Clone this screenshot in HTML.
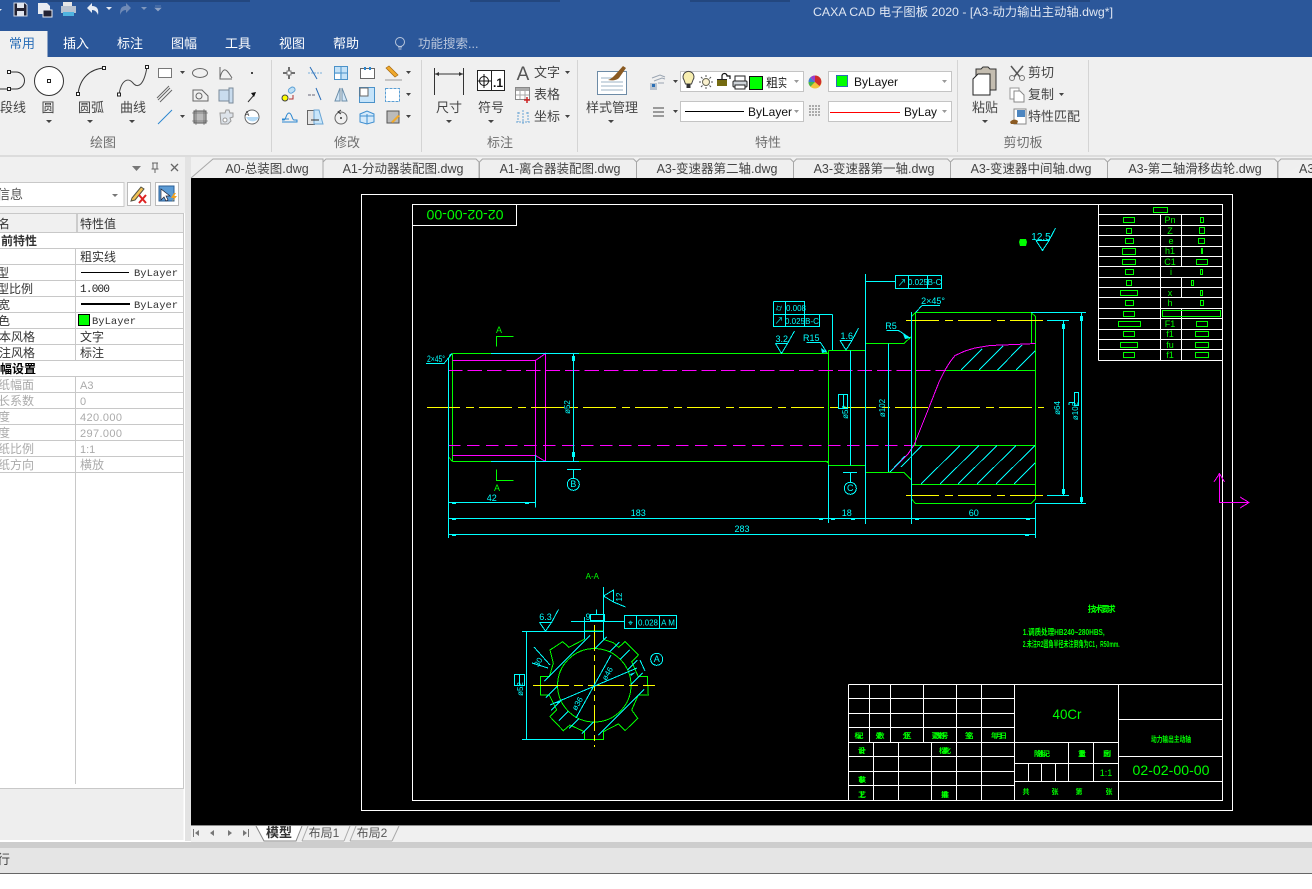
<!DOCTYPE html>
<html lang="zh"><head><meta charset="utf-8"><title>CAXA CAD</title>
<style>
html,body{margin:0;padding:0;background:#fff;width:1312px;height:889px;overflow:hidden}
svg{display:block;position:absolute;left:0;top:0}
text{font-family:"Liberation Sans","Noto Sans CJK SC",sans-serif;white-space:pre}
.c{text-anchor:middle}
.r{font-size:13px;fill:#444}
.t{font-size:13px;fill:#fff;text-anchor:middle}
.d{font-size:12.5px;fill:#444;text-anchor:middle}
.g{font-size:12px;fill:#222;font-family:"Liberation Mono","WenQuanYi Zen Hei",monospace}
.gd{font-size:12px;fill:#aaa;font-family:"Liberation Mono","WenQuanYi Zen Hei",monospace}
.m{font-family:"Liberation Mono","Noto Sans CJK SC",monospace}
.cy{fill:#0ff;font-size:9px;text-anchor:middle}
.gr{fill:#0f0;font-size:9px;text-anchor:middle}
.gs{fill:#0f0;font-size:7px;font-weight:bold;text-anchor:middle;font-family:"Noto Sans CJK SC",sans-serif}
.ic{fill:none;stroke:#666;stroke-width:1}
.bl{fill:none;stroke:#2a86d0;stroke-width:1}
.ar{fill:#444}
</style></head><body>
<svg width="1312" height="889" viewBox="0 0 1312 889" xmlns="http://www.w3.org/2000/svg">
<!-- backgrounds -->
<rect width="1312" height="57" fill="#2b579a"/>
<rect x="40" y="0" width="210" height="2" fill="#23477f"/><rect x="470" y="0" width="90" height="2" fill="#23477f"/><rect x="690" y="0" width="100" height="2" fill="#23477f"/><rect x="1000" y="0" width="90" height="2" fill="#23477f"/>
<rect y="57" width="1312" height="98" fill="#f0f0f0"/>
<rect y="155" width="1312" height="2" fill="#dcdcdc"/>
<rect y="157" width="1312" height="21" fill="#f0f0f0"/>
<rect x="0" y="178" width="185" height="662" fill="#fff"/>
<rect x="0" y="178" width="185" height="35" fill="#f0f0f0"/>
<rect x="185" y="157" width="6" height="684" fill="#e3e3e3"/>
<rect x="191" y="178" width="1121" height="647" fill="#000"/>
<rect x="191" y="825" width="1121" height="17" fill="#f0f0f0"/>
<line x1="191" y1="825.5" x2="1312" y2="825.5" stroke="#8c8c8c"/>
<rect y="788" width="183.500" height="52" fill="#eeeeee"/>
<line x1="0" y1="788.500" x2="184" y2="788.500" stroke="#c8c8c8"/>
<rect y="842" width="1312" height="6" fill="#cdcdcd"/>
<rect y="848" width="1312" height="25" fill="#e5e5e5"/>
<rect y="873" width="1312" height="1" fill="#666"/>
<rect y="874" width="1312" height="15" fill="#fff"/>

<!-- quick access -->
<g>
<path d="M14 3h11l2 2v11H14z" fill="#223" stroke="#cfd6e3"/><rect x="17" y="3" width="7" height="5" fill="#dfe4ee"/><rect x="17" y="11" width="7" height="5" fill="#dfe4ee"/>
<path d="M38 3h9l3 3v8H38z" fill="#e8ebf1"/><rect x="43" y="10" width="9" height="7" fill="#223" stroke="#e8ebf1"/>
<rect x="63" y="2" width="9" height="4" fill="#e6e6e6"/><rect x="61" y="6" width="15" height="7" fill="#b8c2d0"/><rect x="63" y="12" width="11" height="4" fill="#4fb3e0"/>
<path d="M87 8l5-5v3c5 0 7 3 6 9-1-3-3-5-6-5v3z" fill="#e9edf4"/>
<path d="M106 7h6l-3 3z" fill="#e6eaf2"/>
<path d="M131 8l-5-5v3c-5 0-6 3-6 9 1-3 3-5 6-5v3z" fill="#6f8ab6"/>
<path d="M141 7h6l-3 3z" fill="#7f97bd"/>
<path d="M155 6h6M155 8h6l-3 3z" fill="#8fa3c5" stroke="#8fa3c5" stroke-width=".6"/>
<path d="M0 9h2l-2 2z" fill="#e6eaf2"/>
</g>
<text x="963" y="16" text-anchor="middle" font-size="12" fill="#dfe6f2" textLength="300" lengthAdjust="spacingAndGlyphs">CAXA CAD 电子图板 2020 - [A3-动力输出主动轴.dwg*]</text>

<!-- ribbon tabs -->
<rect x="0" y="31" width="47.500" height="26" fill="#f0f0f0"/>
<text x="22" y="48" class="c" font-size="13" fill="#2b6fb8">常用</text>
<text x="76" y="48" class="t">插入</text><text x="130" y="48" class="t">标注</text><text x="184" y="48" class="t">图幅</text><text x="238" y="48" class="t">工具</text><text x="292" y="48" class="t">视图</text><text x="346" y="48" class="t">帮助</text>
<circle cx="400" cy="42" r="4.500" fill="none" stroke="#b8c6dc"/><path d="M398 47h4M398.500 49h3" stroke="#b8c6dc"/>
<text x="418" y="48" font-size="12.500" fill="#b9c6dc">功能搜索...</text>

<!-- separators -->
<g stroke="#d4d4d4"><line x1="271.500" y1="60" x2="271.500" y2="152"/><line x1="421.500" y1="60" x2="421.500" y2="152"/><line x1="577.500" y1="60" x2="577.500" y2="152"/><line x1="957.500" y1="60" x2="957.500" y2="152"/><line x1="1088.500" y1="60" x2="1088.500" y2="152"/></g>

<!-- group labels -->
<g font-size="13" fill="#6e6e6e" text-anchor="middle"><text x="103" y="147">绘图</text><text x="347" y="147">修改</text><text x="500" y="147">标注</text><text x="768" y="147">特性</text><text x="1023" y="147">剪切板</text></g>

<!-- large draw buttons -->
<path d="M9 72h7a8.500 8.500 0 0 1 0 17H9M0 89h7" fill="none" stroke="#333"/>
<rect x="7.500" y="70.500" width="3" height="3" fill="#fff" stroke="#222"/><rect x="7.500" y="87.500" width="3" height="3" fill="#fff" stroke="#222"/>
<circle cx="49" cy="81" r="14.500" fill="#fff" stroke="#333"/><rect x="47.500" y="79.500" width="3" height="3" fill="#fff" stroke="#222"/>
<path d="M78 94C80 78 90 69 104 68" fill="none" stroke="#333"/><rect x="76.500" y="92.500" width="3" height="3" fill="#fff" stroke="#222"/><rect x="102.500" y="66.500" width="3" height="3" fill="#fff" stroke="#222"/>
<path d="M119 95C121 80 128 77 133 83S144 85 147 67" fill="none" stroke="#444"/><rect x="117.500" y="93" width="3" height="3" fill="#fff" stroke="#222"/><rect x="145.500" y="65.500" width="3" height="3" fill="#fff" stroke="#222"/>
<g class="r" text-anchor="middle"><text x="13" y="112">段线</text><text x="48" y="112">圆</text><text x="91" y="112">圆弧</text><text x="133" y="112">曲线</text></g>
<g class="ar"><path d="M46 120h6l-3 3zM87 120h6l-3 3zM129 120h6l-3 3zM180 71h5l-2.500 3zM180 115h5l-2.500 3zM406 71h5l-2.500 3zM406 93h5l-2.500 3zM406 115h5l-2.500 3z"/></g>

<!-- small draw icons -->
<rect x="158.500" y="68.500" width="13" height="9" fill="#fff" stroke="#777"/>
<ellipse cx="200" cy="73" rx="7.500" ry="4.500" class="ic"/>
<path d="M220 67v12h12M220 78c2-9 5-9 7-7s3 4 5 7" class="ic"/><rect x="251" y="72" width="2" height="2" fill="#444"/>
<path d="M158 100l12-12M160 102l12-12M157 98l12-12" class="ic"/>
<path d="M193 90h9l6 6v5h-15z" class="ic"/><circle cx="199" cy="96" r="3" class="ic"/>
<rect x="219" y="90" width="10" height="11" fill="#c9dcee" stroke="#7a8a99"/><rect x="229" y="88" width="4" height="15" fill="#c9dcee" stroke="#7a8a99"/>
<path d="M248 102l6-7" stroke="#333"/><path d="M256 92l-5 1 3 4z" fill="#111"/>
<path d="M158 124l14-14" class="bl"/>
<rect x="194" y="111" width="12" height="12" fill="#bbb" stroke="#555"/><path d="M192 113h16M192 121h16M196 109v16M204 109v16" stroke="#555" stroke-width=".6"/>
<path d="M220 113h5l1-3h3l1 3h3v4l-3 1 1 3-3 3h-7z" fill="#dde3ea" stroke="#999"/><circle cx="225" cy="120" r="2" fill="#fff" stroke="#999"/>
<circle cx="252" cy="117" r="7" fill="#fff" stroke="#666"/><path d="M246 117h13a7 7 0 0 1-13 0z" fill="#b5daf5"/><text x="247" y="116" font-size="7" fill="#333" class="c">A</text>

<!-- modify icons -->
<path d="M289 67v4M289 75v4M283 73h4M291 73h4" stroke="#444" stroke-width="1.500"/><rect x="287" y="71" width="4" height="4" fill="#fff" stroke="#777"/>
<path d="M308 73h14" stroke="#7aafdc" stroke-dasharray="2 1"/><path d="M310 67l7 12" stroke="#2b6fb8"/>
<rect x="334.500" y="66.500" width="13" height="13" fill="#c5e2f7" stroke="#4b92c9"/><path d="M341 66v14M334 73h14" stroke="#4b92c9"/><rect x="335" y="74" width="5" height="5" fill="#fff"/>
<rect x="360.500" y="68.500" width="14" height="10" fill="#fff" stroke="#666"/><rect x="364" y="67" width="2" height="3" fill="#2b86d0"/><rect x="369" y="67" width="2" height="3" fill="#2b86d0"/>
<path d="M386 68l3-2 9 9-3 2z" fill="#f0a92c" stroke="#a86c12" stroke-width=".7"/><path d="M385 80h17" stroke="#999"/>
<circle cx="285" cy="98" r="3" fill="#ff0" stroke="#444"/><rect x="288" y="88" width="7" height="5" rx="2.500" fill="#bfe0f5" stroke="#5a9fd4" transform="rotate(-35 291 90)"/><path d="M289 99h4v-4" stroke="#b03030" fill="none"/>
<path d="M308 95h8" stroke="#667" stroke-dasharray="3 1"/><path d="M316 88l5 12" stroke="#2b6fb8"/>
<path d="M340 88v13l-5 0zM342 88v13l5 0z" fill="#d3e7f7" stroke="#6c8ea8"/>
<rect x="359.500" y="87.500" width="15" height="15" fill="#c6e4fa" stroke="#4b92c9"/><rect x="360" y="88" width="8" height="8" fill="#fff" stroke="#666"/>
<rect x="385.500" y="88.500" width="14" height="13" fill="#fff" stroke="#5a9fd4" stroke-dasharray="3 1"/>
<path d="M282 122h15v-2h-3c-2 0-2-7-5-7s-3 7-5 7h-2" class="bl"/><path d="M282 119h7" class="bl"/>
<rect x="307.500" y="110.500" width="7" height="14" fill="#e4e4e4" stroke="#666"/><path d="M314 110h5l4 14h-9z" fill="#c9e6fa" stroke="#6aa5d4"/><path d="M311 120h8" stroke="#333"/>
<circle cx="341" cy="118" r="6" class="ic" stroke="#333"/><circle cx="341" cy="118" r="1" fill="#333"/><path d="M341 110l-3 2 3 2" stroke="#333" fill="none"/>
<path d="M360 114l7-3 7 3v8l-7 2-7-2z" fill="#d5eafa" stroke="#3f8fd0"/><path d="M367 114v10M360 116h14" stroke="#3f8fd0"/>
<rect x="387" y="111" width="12" height="12" fill="#bbb" stroke="#555"/><path d="M391 122l7-7 2 1-7 7z" fill="#f0a92c"/>

<!-- annotate -->
<path d="M434.500 68v27M463.500 68v27M435 74h28" fill="none" stroke="#333"/><path d="M435 74l4-2v4zM463 74l-4-2v4z" fill="#333"/>
<rect x="477.500" y="70.500" width="27" height="20" fill="#fff" stroke="#222"/><path d="M491.500 70v21" stroke="#222"/><circle cx="484" cy="81" r="4.500" fill="none" stroke="#111"/><path d="M477 81h14M484 74v14" stroke="#111"/><text x="498" y="87" font-size="12" font-weight="bold" fill="#111" class="c">.1</text>
<g class="r" text-anchor="middle"><text x="449" y="112">尺寸</text><text x="491" y="112">符号</text><text x="612" y="112">样式管理</text><text x="985" y="112">粘贴</text></g>
<path d="M446 120h6l-3 3zM488 120h6l-3 3zM608 120h6l-3 3zM982 120h6l-3 3zM565 71h5l-2.500 3zM565 115h5l-2.500 3zM673 80h5l-2.500 3zM673 110h5l-2.500 3z" class="ar"/>
<text x="523" y="80" font-size="19" fill="#555" class="c">A</text>
<rect x="515.500" y="87.500" width="14" height="12" fill="#fff" stroke="#888"/><rect x="516" y="88" width="13" height="3" fill="#aaa"/><path d="M520 88v11M525 88v11M516 95h13" stroke="#aaa"/><path d="M527 97v6M524 100h6" stroke="#c22" stroke-width="1.500"/>
<path d="M518 113h3M526 113h2M518 112v10M528 112v10M516 122h14M523 110v14" stroke="#6aa5d4" stroke-dasharray="2 1" fill="none"/>
<g class="r"><text x="534" y="77">文字</text><text x="534" y="99">表格</text><text x="534" y="121">坐标</text></g>

<!-- style manager -->
<rect x="597.500" y="71.500" width="29" height="23" fill="#fff" stroke="#6d8ba6"/><path d="M601 78h12M601 82h22M601 86h22M601 90h22" stroke="#9db3c6"/>
<path d="M608 80c3-1 5-3 7-5l8-9 3 2-7 10c-2 2-6 3-11 2z" fill="#8a5a22"/>

<!-- properties -->
<rect x="650" y="83" width="7" height="7" fill="#b9c3cf"/><rect x="652" y="84" width="3" height="3" fill="#2a6fb5"/><path d="M652 78l8-3 5 2M654 81l8-3 3 1M658 83h6" stroke="#9aa5b2" fill="none"/>
<path d="M653 108h11M653 112h11M653 116h11" stroke="#444"/>
<rect x="680.500" y="71.500" width="123" height="20" fill="#fff" stroke="#c4c4c4"/>
<rect x="680.500" y="101.500" width="123" height="20" fill="#fff" stroke="#c4c4c4"/>
<rect x="828.500" y="71.500" width="123" height="20" fill="#fff" stroke="#c4c4c4"/>
<rect x="828.500" y="101.500" width="123" height="20" fill="#fff" stroke="#c4c4c4"/>
<path d="M684 80a5.500 5.500 0 1 1 9 0l-1.500 4h-6z" fill="#f7eeb0" stroke="#444"/><rect x="686.500" y="84" width="4" height="4" fill="#333"/>
<circle cx="706" cy="82" r="3.500" fill="#fbf2cf" stroke="#665"/><path d="M706 75v2M706 87v2M699 82h2M711 82h2M701 77l1.500 1.500M711 77l-1.500 1.500M701 87l1.500-1.500M711 87l-1.500-1.500" stroke="#555"/>
<path d="M717 79h10v7h-10z" fill="#222"/><path d="M717 81h10M717 83h10M717 85h10" stroke="#c8b400"/><path d="M722 79v-3a2.500 2.500 0 0 1 5 0h3v3" fill="none" stroke="#111" stroke-width="1.200"/>
<rect x="733" y="81" width="14" height="6" rx="1" fill="#cfd4d9" stroke="#222"/><rect x="735" y="76" width="10" height="5" fill="#fff" stroke="#222"/><rect x="735" y="85" width="10" height="4" fill="#fff" stroke="#222"/>
<rect x="749.500" y="76.500" width="13" height="13" fill="#0f0" stroke="#111"/>
<text x="766" y="87" font-size="12" fill="#222">粗</text><text x="778" y="87" font-size="12" fill="#222" textLength="9" lengthAdjust="spacingAndGlyphs">实</text>
<path d="M794 80h5l-2.500 3zM794 110h5l-2.500 3zM942 80h5l-2.500 3zM942 110h5l-2.500 3z" fill="#999"/>
<line x1="685" y1="111.500" x2="744" y2="111.500" stroke="#000"/>
<text x="748" y="116" font-size="12" fill="#111">ByLayer</text>
<circle cx="815" cy="82" r="6.500" fill="#f2c43d"/><path d="M815 82V75.500a6.500 6.500 0 0 1 6 4zM815 82l6-2.500a6.500 6.500 0 0 1-1.500 6.500z" fill="#d02c2c"/><path d="M815 82l-4.600-4.600a6.500 6.500 0 0 1 4.600-1.900z" fill="#9a3fd0"/><path d="M815 82h-6.500a6.500 6.500 0 0 1 1.900-4.600z" fill="#3a7fd5"/><path d="M815 82l-4.600 4.600a6.500 6.500 0 0 1-1.900-4.600z" fill="#47b648"/>
<g stroke="#666"><path d="M809 106h12M809 109h12M809 112h12M809 115h12" stroke-dasharray="2 1"/></g>
<rect x="836.500" y="75.500" width="11" height="11" fill="#0f0" stroke="#2a6fb5"/>
<text x="854" y="86" font-size="12" fill="#111">ByLayer</text>
<line x1="830" y1="112.500" x2="900" y2="112.500" stroke="#f00"/>
<text x="904" y="116" font-size="12" fill="#111" textLength="33" lengthAdjust="spacingAndGlyphs">ByLay</text>

<!-- clipboard -->
<path d="M976 69h5l2-2h5l2 2h6v21h-20z" fill="#c4bdb0" stroke="#333"/>
<path d="M973 79l5-5h12v21h-17z" fill="#fff" stroke="#222"/>
<path d="M1011 66l9 11M1023 66l-9 11" stroke="#555" stroke-width="1.500"/><circle cx="1012" cy="78" r="2.500" fill="none" stroke="#777"/><circle cx="1022" cy="78" r="2.500" fill="none" stroke="#777"/>
<rect x="1010" y="88" width="9" height="11" fill="#fff" stroke="#999"/><path d="M1014 91h6l4 4v7h-10z" fill="#fff" stroke="#888"/>
<rect x="1014" y="109" width="12" height="15" fill="#fff" stroke="#888"/><rect x="1017" y="110" width="8" height="7" fill="#4d86c0"/><path d="M1010 122c2-3 6-3 8-1l-1 3h-6z" fill="#8a5a22"/>
<g class="r"><text x="1028" y="77">剪切</text><text x="1028" y="99">复制</text><text x="1028" y="121">特性匹配</text></g>
<path d="M1059 93h5l-2.500 3z" class="ar"/>

<!-- doc tabs -->
<g fill="#efefef" stroke="#a8a8a8"><path d="M191 178l22-19h110v19"/><path d="M323 178v-16l3-3h150l3 3v16"/><path d="M479.500 178v-16l3-3h151l3 3v16"/><path d="M636.500 178v-16l3-3h151l3 3v16"/><path d="M793.500 178v-16l3-3h151l3 3v16"/><path d="M950.500 178v-16l3-3h151l3 3v16"/><path d="M1107.500 178v-16l3-3h164l3 3v16"/><path d="M1278 178v-16l3-3h31"/></g>
<g class="d"><text x="267" y="173">A0-总装图.dwg</text><text x="403" y="173">A1-分动器装配图.dwg</text><text x="560" y="173">A1-离合器装配图.dwg</text><text x="717" y="173">A3-变速器第二轴.dwg</text><text x="874" y="173">A3-变速器第一轴.dwg</text><text x="1031" y="173">A3-变速器中间轴.dwg</text><text x="1195" y="173">A3-第二轴滑移齿轮.dwg</text><text x="1299" y="173" text-anchor="start">A3</text></g>

<!-- left panel -->
<path d="M132 166h9l-4.500 5z" fill="#777"/>
<path d="M152 163h6M153 163v6M157 163v6M151.500 169h7M155 169v4" stroke="#666" fill="none"/>
<path d="M171 164l7 7M178 164l-7 7" stroke="#666" stroke-width="1.300"/>
<rect x="-1" y="182.500" width="125" height="24" fill="#fff" stroke="#c8c8c8"/>
<text x="-3" y="199" font-size="13" fill="#555">信息</text>
<path d="M112 194h6l-3 3z" fill="#777"/>
<rect x="127.500" y="182.500" width="23" height="23" fill="#fff" stroke="#bbb"/>
<path d="M132 198l9-11 3 2-9 11-4 1z" fill="#f3c255" stroke="#554"/><path d="M139 195l7 8M146 195l-7 8" stroke="#d22" stroke-width="2"/>
<rect x="155.500" y="182.500" width="23" height="23" fill="#fff" stroke="#bbb"/>
<rect x="159" y="186" width="15" height="15" fill="#5b9bd5" stroke="#2b5f96"/><path d="M161 189v11l3-3 2 4 2-1-2-4h4z" fill="#fff" stroke="#223" stroke-width=".7"/><path d="M174 193l-3 5h3l-2 4 5-6h-3l2-3z" fill="#f0a020"/>

<!-- grid -->
<rect x="0" y="213" width="183.500" height="19" fill="#f0f0f0"/>
<g stroke="#c8c8c8" fill="none" shape-rendering="crispEdges">
<path d="M0 213.500H183.500M0 232.500H183.500M0 248.500H183.500M0 264.500H183.500M0 280.500H183.500M0 296.500H183.500M0 312.500H183.500M0 328.500H183.500M0 344.500H183.500M0 360.500H183.500M0 376.500H183.500M0 392.500H183.500M0 408.500H183.500M0 424.500H183.500M0 440.500H183.500M0 456.500H183.500M0 472.500H183.500"/>
<path d="M183.500 213V788M76.500 213V232M75.500 248V360M75.500 376V784"/>
</g>
<rect x="76" y="214" width="2" height="18" fill="#ccc"/>
<g font-size="12" fill="#333" font-family="'Noto Sans CJK SC',sans-serif">
<text x="-2" y="228">名</text><text x="80" y="228">特性值</text>
<text x="1" y="245" font-weight="bold">前特性</text>
<text x="80" y="261">粗实线</text>
<text x="-3" y="277">型</text><text x="-3" y="293">型比例</text><text x="-2" y="309">宽</text><text x="-2" y="325">色</text><text x="-1" y="341">本风格</text><text x="-1" y="357">注风格</text><text x="80" y="341">文字</text><text x="80" y="357">标注</text>
<text x="0" y="373" font-weight="bold" fill="#000">幅设置</text>
</g>
<g font-size="12" fill="#aaa" font-family="'Noto Sans CJK SC',sans-serif">
<text x="-2" y="389">纸幅面</text><text x="-2" y="405">长系数</text><text x="-2" y="421">度</text><text x="-2" y="437">度</text><text x="-2" y="453">纸比例</text><text x="-2" y="469">纸方向</text><text x="80" y="469">横放</text>
</g>
<g class="gd" font-size="11" style="font-size:11px"><text x="80" y="389">A3</text><text x="80" y="405">0</text><text x="80" y="421" textLength="42">420.000</text><text x="80" y="437" textLength="42">297.000</text><text x="80" y="453">1:1</text></g>
<text x="80" y="292" class="g" style="font-size:11px" textLength="30">1.000</text>
<line x1="81" y1="272.500" x2="129" y2="272.500" stroke="#000"/><text x="134" y="276" class="g" style="font-size:10.500px;fill:#333">ByLayer</text>
<rect x="81" y="303" width="49" height="2" fill="#000"/><text x="134" y="308" class="g" style="font-size:10.500px;fill:#333">ByLayer</text>
<rect x="78.500" y="314.500" width="11" height="11" fill="#0f0" stroke="#000"/><text x="92" y="324" class="g" style="font-size:10.500px;fill:#333">ByLayer</text>
<text x="-3" y="864" font-size="13" fill="#444">行</text>

<!-- bottom tabs -->
<path d="M199 830l-4 3 4 3zM214 830l-4 3 4 3zM228 830l4 3-4 3zM243 830l4 3-4 3z" fill="#777"/>
<path d="M193.500 829v8M248.500 829v8" stroke="#777"/>
<path d="M256 826l8 15h32l6-15z" fill="#fff"/><path d="M256 826l8 15h32l6-15" fill="none" stroke="#888"/>
<path d="M302 841l6-15M344 841l6-15M350 841l6-15M392 841l7-15M302 841h42M350 841h42" fill="none" stroke="#aaa"/>
<text x="279" y="837" font-size="13" font-weight="bold" fill="#333" class="c">模型</text>
<text x="324" y="837" font-size="12" fill="#555" class="c">布局1</text><text x="372" y="837" font-size="12" fill="#555" class="c">布局2</text>

<!-- DRAWING -->
<g shape-rendering="crispEdges" fill="none" stroke-width="1">
<g stroke="#fff">
<rect x="361.500" y="194.500" width="871" height="616"/>
<rect x="412.500" y="204.500" width="810" height="596"/>
<rect x="412.500" y="204.500" width="104" height="21"/>
<!-- param table -->
<path d="M1098.500 204.500V360.500M1098.500 214.500H1222.500M1098.500 225.500H1222.500M1098.500 235.500H1222.500M1098.500 246.500H1222.500M1098.500 256.500H1222.500M1098.500 266.500H1222.500M1098.500 277.500H1222.500M1098.500 287.500H1222.500M1098.500 297.500H1222.500M1098.500 308.500H1222.500M1098.500 318.500H1222.500M1098.500 329.500H1222.500M1098.500 339.500H1222.500M1098.500 349.500H1222.500M1098.500 360.500H1222.500"/>
<path d="M1160.500 214.500V360.500M1181.500 214.500V266.500M1181.500 277.500V297.500M1181.500 308.500V360.500"/>
<!-- title block -->
<path d="M848.500 684.500H1222.500M848.500 698.500H1014.500M848.500 713.500H1014.500M848.500 727.500H1014.500M848.500 742.500H1118.500M848.500 756.500H1014.500M848.500 771.500H1014.500M848.500 785.500H1014.500M848.500 684.500V800.500"/>
<path d="M869.500 684.500V742.500M890.500 684.500V742.500M923.500 684.500V742.500M956.500 684.500V800.500M981.500 684.500V800.500M873.500 742.500V800.500M898.500 742.500V800.500M931.500 742.500V800.500"/>
<path d="M1014.500 684.500V800.500M1118.500 684.500V800.500M1014.500 763.500H1118.500M1014.500 781.500H1222.500M1118.500 719.500H1222.500M1118.500 756.500H1222.500M1068.500 742.500V781.500M1093.500 742.500V781.500M1028.500 763.500V781.500M1041.500 763.500V781.500M1055.500 763.500V781.500"/>
</g>
<g stroke="#0f0">
<!-- table rects -->
<path d="M1153.500 207.500h14v5h-14zM1123.500 217.500h11v5h-11zM1126.500 228.500h5v5h-5zM1125.500 238.500h8v5h-8zM1122.500 248.500h13v6h-13zM1122.500 259.500h13v5h-13zM1125.500 269.500h8v5h-8zM1126.500 280.500h5v5h-5zM1120.500 290.500h17v5h-17zM1125.500 300.500h8v5h-8zM1123.500 311.500h11v5h-11zM1118.500 321.500h22v5h-22zM1123.500 331.500h11v5h-11zM1120.500 342.500h17v5h-17zM1123.500 352.500h11v5h-11z"/>
<path d="M1200.500 217.500h3v5h-3zM1199.500 227.500h5v6h-5zM1198.500 238.500h6v5h-6zM1201.500 248.500h1v5h-1zM1196.500 259.500h11v5h-11zM1200.500 269.500h2v5h-2zM1191.500 280.500h2v5h-2zM1200.500 290.500h2v5h-2zM1200.500 300.500h3v5h-3zM1162.500 310.500h58v6h-58zM1196.500 321.500h11v5h-11zM1195.500 331.500h13v5h-13zM1195.500 342.500h13v5h-13zM1195.500 352.500h13v5h-13z"/>
<!-- A marks -->
<path d="M496.500 346.500V336.500H513.500M496.500 469.500V480.500H513.500"/>
<!-- shaft -->
<path d="M448.500 358V458M452.500 353.500V461.500M448.500 358L452.500 353.500M448.500 457L452.500 461.500M452.500 353.500H828.500M452.500 461.500H828.500"/>
<path d="M828.500 350.500V465.500M828.500 350.500H865.500M828.500 465.500H865.500M865.500 350.500V343.500M865.500 472.500V465.500M825.500 352L828.500 354M825.500 461L828.500 463"/>
<path d="M865.500 343.500H904L911.500 336.500M865.500 472.500H904L911.500 480M911.500 316.500V503M911.500 316.500L915.500 312.500H1031L1035.500 316.500V499L1031 503.500H915.500L911.500 499"/>
<path d="M915.500 312.500V445.500M1031.500 312.500V343.500M945 370.500H1035.500M911.500 445.500H1035.500M911.500 484.500H1035.500"/>
<!-- section outline -->
<path d="M603.300 631V639.300L613.300 642.700L618.700 647.300L625 641.700L638.300 655L631.700 661.700L638.300 676.700H647.300L648.300 695H638.300L631.700 710L637.700 718.300L625 730.700L618.300 724L603.300 731.700V739.300H584.300V731.700L570 725L563.300 730.700L550 716.700L556.700 710L549.300 695H540.300V676.700H549.300L553.300 663.300L550 650L562.700 641.700L569 647.300L584.300 639.300V631Z"/>
<circle cx="594.300" cy="685.300" r="36.700"/>
</g>
<path stroke="#0ff" d="M620.200 659.400L629.700 649.900M568.400 711.200L558.900 720.700M627.600 670L637.500 660.100M579 718.600L569.100 728.500M609.600 652L619.500 642.100M561 700.600L551.100 710.500M631 684.600L642.700 672.900M593.600 722L581.900 733.700M595 648.600L606.700 636.900M557.600 686L545.900 697.700M644.100 689.500L598.500 735.100M590.100 635.500L544.500 681.100"/>
<g stroke="#f0f">
<path d="M452.500 360.500H535.500V455.500H452.500M535.500 360.500L545.500 353.500V461.500L535.500 455.500M535.500 360.500V455.500"/>
<path stroke-dasharray="14.500 5" d="M448 370.500H946"/>
<path stroke-dasharray="12.500 6.500" d="M448 445.500H912"/>
<path d="M1035.500 343.500L1015 344.500L990 345.500L975 348L965 351L955 355.500L950 362L945 370L939 382L930 405L920 430L914 445L908 454L890 472"/>
<path d="M1219.500 473.500V502.500H1249M1214 482L1219.500 473.500L1224.500 482M1240 497L1249 502.500L1240 508"/>
</g>
<g stroke="#ff0">
<path stroke-dasharray="33 6 8 5" d="M427 407.500H1044"/>
<path stroke-dasharray="33 6 8 5" d="M906 320.500H1047M906 495.500H1047"/>
<path stroke-dasharray="36 5 9 5" d="M533 685.500H655"/>
<path stroke-dasharray="26 4 6 4" d="M594.500 625V747"/>
</g>
<g stroke="#0ff">
<path d="M448.500 358V538M535.500 455V507.500M448 502.500H535.500M448 518.500H1035.500M448 534.500H1035.500M491 353.500H579M491 461.500H579M573.500 353.500V461.500"/>
<path d="M828.500 465V523M865.500 274V524M911.500 312V524M1035.500 503V538M850.500 350.500V465.500M888.500 343.500V472M832.500 314.500V350M804.500 314.500H832.500"/>
<path d="M1031 312.500H1086M1035 503.500H1086M1047 320.500H1069M1047 495.500H1069M1063.500 320.500V495.500M1081.500 312.500V503.500"/>
<path d="M773.500 301.500H804.500V314.500M773.500 301.500V326.500H819.500V314.500H773.500M785.500 301.500V326.500M804.500 314.500V326.500"/>
<path d="M895.500 275.500H941.500V288.500H895.500ZM908.500 275.500V288.500M927.500 275.500V288.500M865.500 281.500H895.500"/>
<path d="M426 363.500H444L452 353.500M567 469.500H581M573.500 469.500V478M843 472.500H857M850.500 472.500V482"/>
<path d="M775.500 343.500H787.500L781.500 353.500L775.500 343.500M787.500 343.500L794.500 331"/>
<path d="M806.500 342.500H820.500L826.500 352"/>
<path d="M840 340.500H852L846 350L840 340.500M852 340.500L858.500 328"/>
<path d="M922 305.500H940M922 305.500L915.500 312.500M886.500 330.500H898.500L910 338"/>
<path d="M1036 240.500H1049L1042.500 250.500L1036 240.500M1049 240.500L1055.500 228"/>
<path d="M838.500 394.500H847.500V408.500H838.500ZM843.500 394.500V408.500M1074.500 392.500H1078.500V405.500H1074.500ZM1069 402.500H1074M1069 402.500V405"/>
<!-- hatches -->
<path d="M901 467L922 445.500M921 484L960 445.500M940 484L979 445.500M958 484L997 445.500M977 484L1016 445.500M996 484L1035 445.500M1014 484L1035 463M961 370L982 349M979 370L1003 346M997.500 370L1022 345M1016 370L1035 351M890 472L905 456"/>
<!-- section annot -->
<path d="M603.500 587V639M603.500 596L613.500 590V602L603.500 596M613.500 602L625.500 607M571 621.500H624M624.500 615.500H676.500V628.500H624.500ZM636.500 615.500V628.500M659.500 615.500V628.500M590.500 614.500H604.500V620.500H590.500ZM596.500 609.500V614M584.500 617V639"/>
<path d="M526.500 631V739M522 631.500H603.500M522 739.500H584.500M539.500 622.500H551.500L545.500 631L539.500 622.500M551.500 622.500L558.500 609.500M514.500 674.500H524.500V685.500H514.500ZM519.500 674.500V685.500"/>
<path d="M576 718L611 655M550 705L637 668M640 660L645 671M534 647L550 665M532 663L548 668"/>
</g>
<circle cx="573.300" cy="484.300" r="6" stroke="#0ff"/><circle cx="850.300" cy="488.300" r="6" stroke="#0ff"/><circle cx="656.700" cy="659.300" r="6" stroke="#0ff"/>
</g>
<g fill="#0ff"><path d="M452 353l-3 2 1 2zM827 352l-6-4 1 5zM910 338l-7-4 2 5zM636 672l-6 2 1 2zM553 703l6-2 1 2zM1062 324h3v5h-3zM1062 489h3v5h-3zM1080 316h3v5h-3zM1080 497h3v5h-3zM572 356h3v5h-3zM572 452h3v5h-3zM452 502h4v2h-4zM525 502h4v2h-4zM452 518h4v2h-4zM819 518h4v2h-4zM831 518h4v2h-4zM851 518h4v2h-4zM915 518h4v2h-4zM1026 518h4v2h-4zM452 534h4v2h-4zM1025 534h4v2h-4z"/></g>
<path d="M1020 239h6l1 3-1 4h-6l-1-4z" fill="#0f0"/>
<!-- drawing text -->
<g class="m">
<text transform="rotate(180 465 215)" x="465" y="220" fill="#0f0" font-size="14" text-anchor="middle" textLength="77" lengthAdjust="spacingAndGlyphs">02-02-00-00</text>
<text x="499" y="333" class="gr">A</text><text x="497" y="491" class="gr">A</text>
<text x="436" y="362" class="cy" textLength="18" lengthAdjust="spacingAndGlyphs">2×45°</text>
<text x="491.700" y="501" class="cy">42</text><text x="638.300" y="516" class="cy">183</text><text x="742" y="532" class="cy">283</text><text x="846.700" y="516" class="cy">18</text><text x="973.700" y="516" class="cy">60</text>
<text x="781.700" y="342" class="cy">3.2</text><text x="811.300" y="341" class="cy">R15</text><text x="846.700" y="339" class="cy">1.6</text>
<text x="891" y="329" class="cy">R5</text><text x="933" y="304" class="cy">2×45°</text>
<text x="1041" y="240" class="cy" style="font-size:10px">12.5</text>
<text x="573.300" y="487" class="cy">B</text><text x="850.300" y="491" class="cy">C</text><text x="656.700" y="662" class="cy">A</text>
<text x="796" y="311" class="cy" style="font-size:8px">0.008</text><text x="795" y="324" class="cy" style="font-size:8px">0.025</text><text x="812" y="324" class="cy" style="font-size:8px">B-C</text>
<text x="779" y="311" class="cy">⌭</text><text x="779" y="324" class="cy">↗</text>
<text x="902" y="286" class="cy">↗</text><text x="918" y="285" class="cy" style="font-size:8px">0.025</text><text x="934.500" y="285" class="cy" style="font-size:8px">B-C</text>
<text transform="rotate(-90 570 407)" x="570" y="407" class="cy" style="font-size:8px">ø52</text>
<text transform="rotate(-90 848 412)" x="848" y="412" class="cy" style="font-size:8px">ø52</text>
<text transform="rotate(-90 885 408)" x="885" y="408" class="cy" style="font-size:8px">ø102</text>
<text transform="rotate(-90 1060 408)" x="1060" y="408" class="cy" style="font-size:8px">ø64</text>
<text transform="rotate(-90 1078 411)" x="1078" y="411" class="cy" style="font-size:8px">ø102</text>
<text x="592.300" y="579" class="gr" style="font-size:8px">A-A</text>
<text x="545.500" y="620" class="cy">6.3</text><text x="588" y="620" class="cy">9</text>
<text x="619" y="600" class="cy" transform="rotate(-90 619 597)" style="font-size:8px">12</text>
<text x="630.500" y="626" class="cy">⌖</text><text x="648" y="625.500" class="cy" style="font-size:8px">0.028</text><text x="668" y="625.500" class="cy" style="font-size:8px">A M</text>
<text x="578" y="706" class="cy" transform="rotate(-60 578 704)" style="font-size:8px">ø36</text>
<text x="608" y="676" class="cy" transform="rotate(-60 608 674)" style="font-size:8px">ø46</text>
<text x="538" y="665" class="cy" transform="rotate(-60 538 662)" style="font-size:8px">30</text>
<text x="521" y="691" class="cy" transform="rotate(-90 521 689)" style="font-size:8px">ø52</text>
<text x="1067" y="719" fill="#0f0" font-size="14" text-anchor="middle" textLength="29" lengthAdjust="spacingAndGlyphs">40Cr</text>
<text x="1171" y="775" fill="#0f0" font-size="14" text-anchor="middle" textLength="77" lengthAdjust="spacingAndGlyphs">02-02-00-00</text>
<text x="1106" y="776" class="gr" style="font-size:9px">1:1</text>
<g class="gr" style="font-size:9px"><text x="1170" y="223">Pn</text><text x="1170" y="234">Z</text><text x="1171" y="244">e</text><text x="1170" y="254">h1</text><text x="1170" y="265">C1</text><text x="1171" y="275">i</text><text x="1170" y="296">x</text><text x="1170" y="306">h</text><text x="1170" y="327">F1</text><text x="1170" y="337">f1</text><text x="1170" y="348">fu</text><text x="1170" y="358">f1</text></g>
</g>
<g class="gs">
<text x="1101.700" y="612" style="font-size:8.500px" textLength="28">技术要求</text>
<text x="1022.700" y="635" style="font-size:8.500px;text-anchor:start" textLength="82" lengthAdjust="spacingAndGlyphs">1.调质处理HB240~280HBS,</text>
<text x="1022.700" y="647" style="font-size:8.500px;text-anchor:start" textLength="97" lengthAdjust="spacingAndGlyphs">2.未注R2圆角半径未注倒角为C1，R50mm.</text>
<text x="859" y="738" textLength="9">标记</text><text x="880" y="738" textLength="9">处数</text><text x="907" y="738" textLength="9">分区</text><text x="940" y="738" textLength="17">更改文件号</text><text x="969.500" y="738" textLength="9">签名</text><text x="999" y="738" textLength="16">年月日</text>
<text x="862" y="753" textLength="8">设计</text><text x="945" y="753" textLength="12">标准化</text><text x="862" y="782" textLength="8">审核</text><text x="862" y="797" textLength="8">工艺</text><text x="945" y="797" textLength="8">批准</text>
<text x="1042" y="756" textLength="16">阶段标记</text><text x="1082" y="756" textLength="8">重量</text><text x="1107" y="756" textLength="8">比例</text>
<text x="1026" y="794" textLength="4">共</text><text x="1055" y="794" textLength="4">张</text><text x="1079" y="794" textLength="4">第</text><text x="1109" y="794" textLength="4">张</text>
<text x="1171" y="742" style="font-size:8px" textLength="40" lengthAdjust="spacingAndGlyphs">动力输出主动轴</text>
</g>
</svg>
</body></html>
